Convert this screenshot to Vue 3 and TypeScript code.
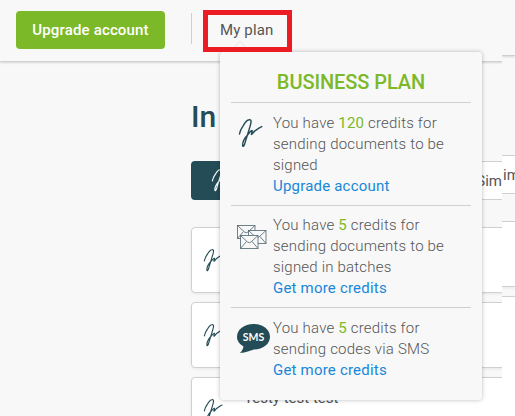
<script setup lang="ts">
interface PlanItem {
  icon: 'sign' | 'batch' | 'sms'
  credits: number
  use: string[]
  link: string
}

const items: PlanItem[] = [
  { icon: 'sign', credits: 120, use: ['sending documents to be', 'signed'], link: 'Upgrade account' },
  { icon: 'batch', credits: 5, use: ['sending documents to be', 'signed in batches'], link: 'Get more credits' },
  { icon: 'sms', credits: 5, use: ['sending codes via SMS'], link: 'Get more credits' },
]
const cards = [1, 2, 3]
const signature =
  'M0.500 15.500 C1 12 2.500 9.500 4.300 7 C6 4 8 1 10.500 0.700 C13.500 0 12.500 4 11.800 6.500 C10.500 11 8 19 6.500 24 C5.500 28 4 29.500 3.800 27.500 C3.500 23 6 19.500 9.300 16 C11 14.500 12.500 11.500 13.700 12 C14.300 12.500 12.500 15.500 13 16 C13.800 16.500 15 13.500 16.500 12.300 C19 10.500 21 9 23.700 7.800'
</script>

<template>
  <div class="screen">
    <header class="topbar">
      <button class="upgrade">Upgrade account</button>
      <span class="rule"></span>
      <a class="my-plan">My plan</a>
    </header>
    <main class="page">
      <h1>In</h1>
      <div class="toolbar">
        <button class="new">
          <svg class="pen" viewBox="0 0 25 30"><path :d="signature" /></svg>
        </button>
        <div class="search">Sim</div>
      </div>
      <article v-for="card in cards" :key="card" class="card">
        <svg class="pen" viewBox="0 0 25 30"><path :d="signature" /></svg>
        <div v-if="card === 3" class="doc">
          <div>Testy test test</div>
          <div class="to">Sent to: <span>2 Recipients</span></div>
        </div>
      </article>
    </main>

    <aside class="edge">
      <div class="edge-bar"></div>
      <div class="edge-search">im</div>
      <div class="edge-card"></div>
      <div class="edge-card last"></div>
    </aside>

    <section class="popup">
      <h2>BUSINESS PLAN</h2>
      <div v-for="item in items" :key="item.icon" class="item" :class="item.icon">
        <div class="icon">
          <svg v-if="item.icon === 'sign'" class="pen" viewBox="0 0 25 30"><path :d="signature" /></svg>
          <svg v-else-if="item.icon === 'batch'" class="mail" viewBox="0 0 30 25">
            <g v-for="(p, i) in [[0.5, 0.5], [11.5, 5.5], [3.5, 10.5]]" :key="i" :transform="`translate(${p[0]} ${p[1]})`">
              <rect width="17.500" height="13" />
              <path d="M0 0 L7 6.500 Q8.750 8 10.500 6.500 L17.500 0 M0 13 L6 6 M17.500 13 L11.500 6" />
            </g>
          </svg>
          <svg v-else class="bubble" viewBox="0 0 33 30">
            <path d="M16.500 0 C26 0 33 5.500 33 12.800 C33 20 26 25.500 17 25.500 C13 26.500 9 28.500 3 29 C5 27 6 25 6.500 22.500 C2.500 20 0 17 0 13 C0 5.500 7 0 16.500 0Z" />
            <text x="16.500" y="16.500" text-anchor="middle">SMS</text>
          </svg>
        </div>
        <div class="copy">
          <div>You have <b>{{ item.credits }}</b> credits for</div>
          <div v-for="line in item.use" :key="line">{{ line }}</div>
          <a>{{ item.link }}</a>
        </div>
      </div>
    </section>
    <div class="marker"></div>
    <svg class="caret" viewBox="0 0 14 7"><path d="M1 6.500 L7 0.700 L13 6.500" /></svg>
  </div>
</template>

<style>
body { margin: 0; overflow: hidden; }
</style>

<style scoped>
* { box-sizing: border-box; }
.screen { position: relative; width: 515px; height: 416px; overflow: hidden; background: #f8f8f8; color: #555; font-family: Roboto, sans-serif; font-size: 15px; }
button { border: 0; padding: 0; font: inherit; }
.topbar { display: flex; width: 502px; height: 62px; padding: 11px 0 0 16px; border-bottom: 1px solid #d0d0d0; box-shadow: 0 1px 2px #0002; }
.upgrade { width: 149px; height: 38px; border-radius: 4px; background: #7bb928; color: #fff; font-weight: 500; letter-spacing: .16px; }
.rule { width: 1px; height: 31px; margin: 2px 28px 0 26px; background: #d0d0d0; }
.my-plan { padding-top: 10px; line-height: 18px; letter-spacing: .15px; }
.page { width: 502px; height: 354px; padding-left: 191px; overflow: hidden; }
h1 { margin: 38px 0 0; color: #244c57; font-size: 30px; line-height: 34px; font-weight: 500; }
.toolbar { display: flex; height: 39px; margin-top: 27px; }
.new { width: 150px; padding-left: 21px; text-align: left; background: #244c57; border-radius: 4px; }
.search { flex: 1; padding-left: 137px; border: solid #d0d0d0; border-width: 1px 0; background: #fff; line-height: 38px; }
.pen { display: block; flex: none; width: 24px; height: 29px; overflow: visible; }
.pen path { fill: none; stroke: #244c57; stroke-width: 1.5; stroke-linecap: round; }
.new .pen, .card .pen { width: 19px; height: 23px; }
.new .pen path { stroke: #fff; }
.card { display: flex; width: 340px; height: 66px; margin-top: 9px; padding: 21px 0 0 12px; border: 1px solid #d0d0d0; border-radius: 4px; background: #fff; box-shadow: 0 1px 3px #0001; }
.toolbar + .card { margin-top: 27px; }
.doc { margin: -12px 0 0 21px; line-height: 23px; white-space: nowrap; }
.doc .to { padding-top: 1px; }
.doc span { color: #1787d8; }
.edge { position: absolute; top: 0; right: 0; width: 13px; height: 416px; background: #f8f8f8; overflow: hidden; }
.edge-bar { height: 56px; border-bottom: 1px solid #d0d0d0; box-shadow: 0 1px 2px #0002; }
.edge-search { height: 39px; margin-top: 99px; padding-left: 1px; border: solid #d0d0d0; border-width: 1px 0; background: #fff; line-height: 38px; }
.edge-card { height: 66px; margin-top: 27px; border: solid #d0d0d0; border-width: 1px 0; background: #fff; box-shadow: 0 1px 3px #0001; }
.last { height: 140px; margin-top: 9px; }
.popup { position: absolute; left: 220px; top: 52px; width: 262px; height: 348px; padding: 0 11px; border-radius: 3px; background: #f8f8f8; box-shadow: 0 0 4px #0004; }
h2 { height: 50px; margin: 0; padding-top: 18px; color: #7bb928; font-size: 20px; line-height: 25px; font-weight: 500; letter-spacing: -.08px; text-align: center; }
.item { display: flex; height: 103px; padding-top: 10px; border-top: 1px solid #d0d0d0; }
.batch { height: 102px; padding-top: 9px; }
.icon { flex: none; width: 42px; }
.sign .icon { padding: 6px 0 0 8px; }
.batch .icon { padding: 10px 0 0 6px; }
.sms .icon { padding: 6px 0 0 6px; }
.mail { display: block; width: 30px; height: 25px; }
.mail rect { fill: #f8f8f8; }
.mail path { fill: none; }
.mail { stroke: #4c6570; stroke-width: .8; }
.bubble { display: block; width: 33px; height: 30px; }
.bubble path { fill: #244c57; }
.bubble text { fill: #fff; font: 700 10.500px Lato, sans-serif; }
.copy { color: #555; font-weight: 300; line-height: 21px; letter-spacing: .2px; white-space: nowrap; }
.copy b { color: #7bb928; font-weight: 400; }
.copy a { color: #1787d8; font-weight: 400; }
.marker { position: absolute; left: 203px; top: 10px; width: 89px; height: 42px; border: 5px solid #ed1c24; }
.caret { position: absolute; left: 233px; top: 41px; width: 14px; height: 6px; }
.caret path { fill: none; stroke: #ddd; }
</style>
